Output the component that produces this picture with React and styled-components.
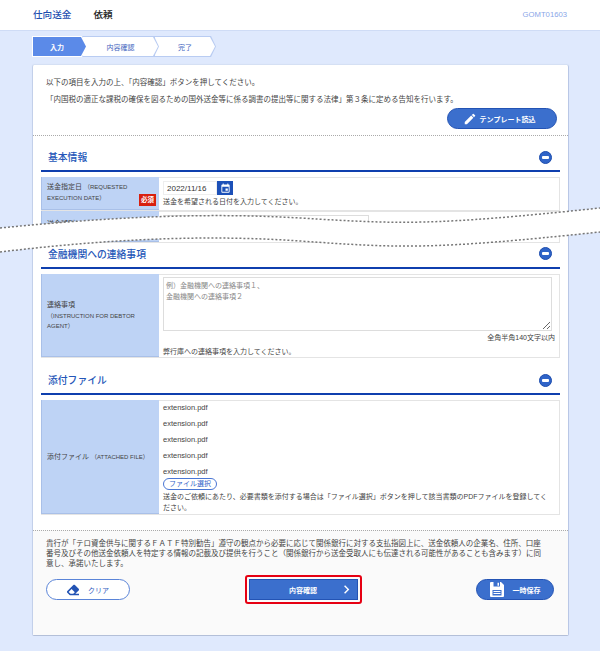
// App.jsx
import styled, { createGlobalStyle } from "styled-components";
import { MdEdit, MdEvent, MdChevronRight } from "react-icons/md";
import { FaEraser } from "react-icons/fa";

const GlobalStyle = createGlobalStyle`
  html, body {
    margin: 0;
    padding: 0;
    background: #dfe9fd;
  }
  body {
    font-family: "Liberation Sans", "Noto Sans CJK JP", sans-serif;
    font-size: 7.5px;
    color: #444;
  }
  * {
    box-sizing: border-box;
  }
`;

const Page = styled.div`
  position: relative;
  width: 600px;
  height: 651px;
  overflow: hidden;
`;

const Header = styled.header`
  display: flex;
  align-items: center;
  height: 31px;
  padding: 0 33px 2px;
  background: #fff;
  border-bottom: 1px solid #cfdcf6;
`;

const HeaderTitle = styled.span`
  font-size: 9.6px;
  font-weight: 500;
  color: ${(props) => (props.$current ? "#222" : "#1f4fb0")};
  margin-right: 22px;
`;

const ScreenId = styled.span`
  margin-left: auto;
  font-size: 7.7px;
  color: #8aa6e8;
`;

const StepBar = styled.ol`
  display: flex;
  margin: 5px 0 0 32px;
  padding: 0;
  list-style: none;
  height: 21px;
`;

const arrow = "polygon(0 0, calc(100% - 5px) 0, 100% 50%, calc(100% - 5px) 100%, 0 100%)";

const Step = styled.li`
  position: relative;
  display: flex;
  align-items: center;
  justify-content: center;
  width: ${(props) => props.$width}px;
  margin-left: ${(props) => (props.$first ? 0 : -5)}px;
  z-index: ${(props) => props.$z};
  clip-path: ${arrow};
  background: ${(props) => (props.$active ? "#fff" : "#b9ccf2")};
  font-size: 7px;
  padding-right: ${(props) => (props.$first ? 5 : 0)}px;
  color: ${(props) => (props.$active ? "#fff" : "#3f66c0")};
  font-weight: ${(props) => (props.$active ? 700 : 400)};

  &::before {
    content: "";
    position: absolute;
    inset: 1px;
    clip-path: ${arrow};
    background: ${(props) => (props.$active ? "#5b8ae8" : "#fff")};
  }

  span {
    position: relative;
  }
`;

const Card = styled.main`
  margin: 8px 0 0 32px;
  width: 537px;
  height: 571px;
  display: flex;
  flex-direction: column;
  background: #fff;
  border-left: 1px solid #c3d0ea;
  border-right: 1px solid #b9c7e6;
  border-bottom: 1px solid #b3bfd8;
  box-shadow: 0 -1px 1px #d4dff3;
  border-radius: 2px;
`;

const Intro = styled.section`
  height: 71px;
  padding: 13px 11px 0 13px;
  border-bottom: 1px dotted #aaa;
  line-height: 10px;
`;

const IntroLine = styled.p`
  margin: 0 0 7px;
`;

const IntroActions = styled.div`
  display: flex;
  justify-content: flex-end;
  margin-top: -4px;
`;

const PillButton = styled.button`
  display: inline-flex;
  align-items: center;
  justify-content: center;
  gap: ${(props) => props.$gap || 6}px;
  width: ${(props) => props.$width}px;
  height: 21px;
  padding: 0 ${(props) => props.$shift || 0}px 0 0;
  border-radius: 11px;
  border: 1px solid ${(props) => (props.$outline ? "#5a84d8" : "#2353b4")};
  background: ${(props) => (props.$outline ? "#fff" : "#3b6fcd")};
  color: ${(props) => (props.$outline ? "#2f5cc0" : "#fff")};
  font-family: inherit;
  font-size: 7px;
  font-weight: ${(props) => (props.$outline ? 400 : 700)};

  svg {
    flex: none;
  }
`;

const Section = styled.section`
  padding: 0 8px;
  height: ${(props) => props.$height}px;
  overflow: ${(props) => (props.$cut ? "hidden" : "visible")};
`;

const SectionHead = styled.div`
  display: flex;
  align-items: center;
  justify-content: space-between;
  height: ${(props) => (props.$compact ? 25 : 36)}px;
  padding: ${(props) => (props.$compact ? "0 8px 4px 7px" : "8px 8px 0 7px")};
  border-bottom: 2px solid #0f3fae;
  margin-bottom: 5px;
`;

const SectionTitle = styled.h2`
  margin: 0;
  font-size: 9.8px;
  font-weight: 500;
  color: #2456b8;
`;

const CollapseToggle = styled.span`
  position: relative;
  width: 13px;
  height: 13px;
  border-radius: 50%;
  background: #2f64c8;
  border: 1px solid #1c4cae;

  &::before {
    content: "";
    position: absolute;
    left: 2px;
    right: 2px;
    top: 4px;
    height: 3px;
    border-radius: 1px;
    background: #fff;
  }
`;

const FormRow = styled.div`
  display: grid;
  grid-template-columns: 118px 1fr;
  min-height: ${(props) => props.$height}px;
  border-bottom: 1px solid #e4e4e4;
`;

const RowLabel = styled.div`
  position: relative;
  display: flex;
  align-items: ${(props) => (props.$center ? "center" : "flex-start")};
  padding: ${(props) => (props.$center ? "2px 5px 0" : `${props.$top || 5}px 22px 0 5px`)};
  background: #bed3f5;
  border-bottom: 1px solid #a9c0e8;
  border-left: 1px solid #a9c0e8;
  font-size: 7px;
  line-height: 10.5px;
  color: #444;
`;

const Latin = styled.span`
  font-size: 6px;
`;

const RequiredTag = styled.span`
  position: absolute;
  right: 3px;
  bottom: 3px;
  width: 17px;
  height: 12px;
  line-height: 12px;
  text-align: center;
  background: #d8200f;
  color: #fff;
  font-size: 6.5px;
  font-weight: 700;
`;

const RowValue = styled.div`
  display: flex;
  flex-direction: column;
  padding: ${(props) => props.$padding || "3px 4px"};
  border-top: 1px solid #e4e4e4;
  border-right: 1px solid #e4e4e4;
  font-size: 7px;
  line-height: 11px;
`;

const DateField = styled.div`
  display: flex;
  height: 14px;
  margin-bottom: 1px;
`;

const DateInput = styled.input`
  width: 54px;
  height: 14px;
  padding: 0 0 0 3px;
  border: 1px solid #eee;
  font-family: inherit;
  font-size: 8px;
  color: #333;
`;

const CalendarButton = styled.button`
  display: flex;
  align-items: center;
  justify-content: center;
  width: 16px;
  height: 14px;
  padding: 0;
  border: 0;
  background: #1c50b8;
  color: #fff;
`;

const WideInput = styled.input`
  width: 206px;
  height: 16px;
  border: 1px solid #ddd;
`;

const MemoBox = styled.textarea`
  display: block;
  width: 389px;
  height: 54px;
  padding: 2px 2px;
  border: 1px solid #ddd;
  font-family: inherit;
  font-size: 7px;
  line-height: 11px;
  outline: none;

  &::placeholder {
    color: #888;
    opacity: 1;
  }
`;

const Counter = styled.div`
  text-align: right;
  margin: 1px 0 3px;
`;

const FileName = styled.div`
  height: 16px;
  line-height: 13px;
  font-size: 7.5px;
`;

const FileButton = styled.button`
  display: block;
  width: 54px;
  height: 12px;
  padding: 0;
  margin: -3px 0 1px;
  border-radius: 6px;
  border: 1px solid #4a76d4;
  background: #fff;
  color: #3463c8;
  font-family: inherit;
  font-size: 7px;
  line-height: 10px;
`;

const Notice = styled.footer`
  flex: 1;
  margin-top: 14px;
  padding: 8px 13px 0 13px;
  background: #fafafa;
  border-top: 1px dotted #aaa;
`;

const NoticeText = styled.p`
  margin: 0;
  padding-right: 10px;
  line-height: 10px;
`;

const Actions = styled.div`
  display: grid;
  grid-template-columns: 1fr auto 1fr;
  align-items: center;
  margin-top: 6px;
`;

const ActionSlot = styled.div`
  display: flex;
  justify-content: ${(props) => props.$align};
  padding-right: ${(props) => props.$pad || 0}px;
`;

const Highlight = styled.div`
  padding: 2px;
  border: 2px solid #e60012;
  border-radius: 3px;
  margin-left: 5px;
`;

const SubmitButton = styled.button`
  position: relative;
  display: flex;
  align-items: center;
  justify-content: center;
  width: 109px;
  height: 21px;
  padding: 0;
  border: 1px solid #2353b4;
  background: #3b6fcd;
  color: #fff;
  font-family: inherit;
  font-size: 7px;
  font-weight: 700;

  svg {
    position: absolute;
    right: 2px;
    top: 1px;
  }
`;

const TearOverlay = styled.svg`
  position: absolute;
  left: 0;
  top: 0;
  pointer-events: none;
`;

const upper = "M0 228 C 100 218, 200 212, 300 218 C 400 224, 430 226, 600 208";
const lower = "M0 252 C 100 240, 200 234, 300 241 C 400 248, 430 250, 600 232";
const lowerBack = "L600 232 C 430 250, 400 248, 300 241 C 200 234, 100 240, 0 252 Z";

const files = ["extension.pdf", "extension.pdf", "extension.pdf", "extension.pdf", "extension.pdf"];

const SaveIcon = () => (
  <svg width="14" height="15" viewBox="0 0 14 15">
    <path d="M0 1a1 1 0 0 1 1-1h10l3 3v11a1 1 0 0 1-1 1H1a1 1 0 0 1-1-1z" fill="#fff" />
    <path d="M3.5 0h6.5v4.5H3.5z" fill="#3b6fcd" />
    <path d="M7.5 .8h1.5v3H7.5z" fill="#fff" />
    <path d="M2.5 8h9v5.5h-9z" fill="#3b6fcd" />
    <path d="M3.5 9h7v1h-7zM3.5 11h7v1h-7z" fill="#fff" />
  </svg>
);

export default function App() {
  return (
    <Page>
      <GlobalStyle />
      <Header>
        <HeaderTitle>仕向送金</HeaderTitle>
        <HeaderTitle $current>依頼</HeaderTitle>
        <ScreenId>GOMT01603</ScreenId>
      </Header>

      <StepBar>
        <Step $first $active $width={55} $z={3}>
          <span>入力</span>
        </Step>
        <Step $width={77} $z={2}>
          <span>内容確認</span>
        </Step>
        <Step $width={62} $z={1}>
          <span>完了</span>
        </Step>
      </StepBar>

      <Card>
        <Intro>
          <IntroLine>以下の項目を入力の上、「内容確認」ボタンを押してください。</IntroLine>
          <IntroLine>「内国税の適正な課税の確保を図るための国外送金等に係る調書の提出等に関する法律」第３条に定める告知を行います。</IntroLine>
          <IntroActions>
            <PillButton $width={110} $gap={3} $shift={6}>
              <MdEdit size={14} />
              テンプレート読込
            </PillButton>
          </IntroActions>
        </Intro>

        <Section $height={108} $cut>
          <SectionHead>
            <SectionTitle>基本情報</SectionTitle>
            <CollapseToggle />
          </SectionHead>
          <FormRow $height={32}>
            <RowLabel>
              <div>
                送金指定日 <Latin>（REQUESTED</Latin>
                <br />
                <Latin>EXECUTION DATE）</Latin>
              </div>
              <RequiredTag>必須</RequiredTag>
            </RowLabel>
            <RowValue>
              <DateField>
                <DateInput defaultValue="2022/11/16" />
                <CalendarButton>
                  <MdEvent size={11} />
                </CalendarButton>
              </DateField>
              送金を希望される日付を入力してください。
            </RowValue>
          </FormRow>
          <FormRow $height={32}>
            <RowLabel $top={8}>
              <div>送金種別</div>
            </RowLabel>
            <RowValue>
              <WideInput />
            </RowValue>
          </FormRow>
        </Section>

        <Section $height={115}>
          <SectionHead $compact>
            <SectionTitle>金融機関への連絡事項</SectionTitle>
            <CollapseToggle />
          </SectionHead>
          <FormRow $height={84}>
            <RowLabel $center>
              <div>
                連絡事項
                <br />
                <Latin>（INSTRUCTION FOR DEBTOR</Latin>
                <br />
                <Latin>AGENT）</Latin>
              </div>
            </RowLabel>
            <RowValue $padding="2px 4px 0">
              <MemoBox placeholder={"例）金融機関への連絡事項１、\n金融機関への連絡事項２"} />
              <Counter>全角半角140文字以内</Counter>
              弊行庫への連絡事項を入力してください。
            </RowValue>
          </FormRow>
        </Section>

        <Section $height={157}>
          <SectionHead>
            <SectionTitle>添付ファイル</SectionTitle>
            <CollapseToggle />
          </SectionHead>
          <FormRow $height={115}>
            <RowLabel $center>
              <div>
                添付ファイル <Latin>（ATTACHED FILE）</Latin>
              </div>
            </RowLabel>
            <RowValue $padding="0 10px 0 4px">
              {files.map((name, i) => (
                <FileName key={i}>{name}</FileName>
              ))}
              <FileButton>ファイル選択</FileButton>
              送金のご依頼にあたり、必要書類を添付する場合は「ファイル選択」ボタンを押して該当書類のPDFファイルを登録してください。
            </RowValue>
          </FormRow>
        </Section>

        <Notice>
          <NoticeText>
            貴行が「テロ資金供与に関するＦＡＴＦ特別勧告」遵守の観点から必要に応じて関係銀行に対する支払指図上に、送金依頼人の企業名、住所、口座番号及びその他送金依頼人を特定する情報の記載及び提供を行うこと（関係銀行から送金受取人にも伝達される可能性があることも含みます）に同意し、承諾いたします。
          </NoticeText>
          <Actions>
            <ActionSlot $align="flex-start">
              <PillButton $outline $width={84} $gap={9}>
                <FaEraser size={12} color="#2353b4" />
                クリア
              </PillButton>
            </ActionSlot>
            <Highlight>
              <SubmitButton>
                内容確認
                <MdChevronRight size={17} />
              </SubmitButton>
            </Highlight>
            <ActionSlot $align="flex-end" $pad={1}>
              <PillButton $width={78} $gap={9}>
                <SaveIcon />
                一時保存
              </PillButton>
            </ActionSlot>
          </Actions>
        </Notice>
      </Card>

      <TearOverlay width="600" height="651" viewBox="0 0 600 651">
        <path d={`${upper} ${lowerBack}`} fill="#fff" />
        <path d={upper} fill="none" stroke="#777" strokeWidth="1.5" strokeDasharray="2 2" />
        <path d={lower} fill="none" stroke="#777" strokeWidth="1.5" strokeDasharray="2 2" />
      </TearOverlay>
    </Page>
  );
}
